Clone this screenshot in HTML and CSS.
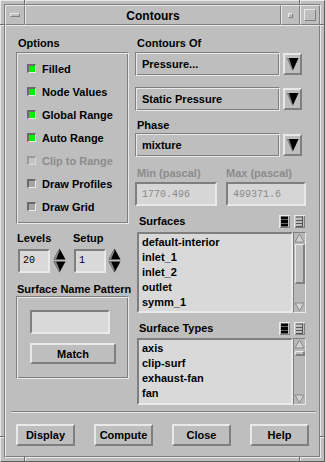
FILE: index.html
```html
<!DOCTYPE html>
<html>
<head>
<meta charset="utf-8">
<title>Contours</title>
<link rel="stylesheet" href="styles.css">
</head>
<body>
<div class="win">
  <div class="inner">
    <div class="titlebar">
      <div class="tbtn menu"><span class="menubar"></span></div>
      <div class="tbtn title">Contours</div>
      <div class="tbtn mini"><span class="minisq"></span></div>
      <div class="tbtn maxi"><span class="maxsq"></span></div>
    </div>
    <div class="client">
      <div class="main">
        <div class="leftcol">
          <div class="lbl lpad">Options</div>
          <div class="etched options">
            <div class="chk on"><span class="box"></span>Filled</div>
            <div class="chk on"><span class="box"></span>Node Values</div>
            <div class="chk on"><span class="box"></span>Global Range</div>
            <div class="chk on"><span class="box"></span>Auto Range</div>
            <div class="chk dis"><span class="box"></span>Clip to Range</div>
            <div class="chk"><span class="box"></span>Draw Profiles</div>
            <div class="chk"><span class="box"></span>Draw Grid</div>
          </div>
          <div class="spinrow">
            <div class="spingrp g1">
              <div class="lbl">Levels</div>
              <div class="spin">
                <div class="field mono">20</div>
                <svg class="arrows" width="13" height="25" viewBox="0 0 13 25">
                  <polygon points="0.5,11.5 12.5,11.5 6.5,0.5" fill="#000"/>
                  <polygon points="0.5,11.5 3,11.5 6.5,3 6.5,0.5" fill="#8a8a8a"/>
                  <polygon points="0.5,13.5 12.5,13.5 6.5,24.5" fill="#000"/>
                  <polygon points="0.5,13.5 3,13.5 6.5,21.5 6.5,24.5" fill="#8a8a8a"/>
                </svg>
              </div>
            </div>
            <div class="spingrp g2">
              <div class="lbl">Setup</div>
              <div class="spin">
                <div class="field mono">1</div>
                <svg class="arrows" width="13" height="25" viewBox="0 0 13 25">
                  <polygon points="0.5,11.5 12.5,11.5 6.5,0.5" fill="#000"/>
                  <polygon points="0.5,11.5 3,11.5 6.5,3 6.5,0.5" fill="#8a8a8a"/>
                  <polygon points="0.5,13.5 12.5,13.5 6.5,24.5" fill="#000"/>
                  <polygon points="0.5,13.5 3,13.5 6.5,21.5 6.5,24.5" fill="#8a8a8a"/>
                </svg>
              </div>
            </div>
          </div>
          <div class="lbl snp">Surface Name Pattern</div>
          <div class="etched pattern">
            <div class="field patfield"></div>
            <div class="btn match">Match</div>
          </div>
        </div>

        <div class="rightcol">
          <div class="lbl rpad">Contours Of</div>
          <div class="dd first">
            <div class="ddtext">Pressure...</div>
            <div class="ddbtn">
              <svg width="15" height="18" viewBox="0 0 15 18">
                <polygon points="1.5,3 13.5,3 7.5,16" fill="#808080"/>
                <polygon points="4,3 13.5,3 8,15" fill="#000"/>
              </svg>
            </div>
          </div>
          <div class="dd second">
            <div class="ddtext">Static Pressure</div>
            <div class="ddbtn">
              <svg width="15" height="18" viewBox="0 0 15 18">
                <polygon points="1.5,3 13.5,3 7.5,16" fill="#808080"/>
                <polygon points="4,3 13.5,3 8,15" fill="#000"/>
              </svg>
            </div>
          </div>
          <div class="lbl rpad phase">Phase</div>
          <div class="dd third">
            <div class="ddtext">mixture</div>
            <div class="ddbtn">
              <svg width="15" height="18" viewBox="0 0 15 18">
                <polygon points="1.5,3 13.5,3 7.5,16" fill="#808080"/>
                <polygon points="4,3 13.5,3 8,15" fill="#000"/>
              </svg>
            </div>
          </div>
          <div class="mmlabels"><span class="mmmin">Min (pascal)</span><span class="mmmax">Max (pascal)</span></div>
          <div class="mmfields">
            <div class="field mono disabled fmin">1770.496</div>
            <div class="field mono disabled fmax">499371.6</div>
          </div>

          <div class="listhead">
            <span class="lbl">Surfaces</span>
            <span class="icons">
              <svg class="icon" width="11" height="13" viewBox="0 0 11 13">
                <rect x="0" y="0" width="11" height="13" fill="#e9e9e9"/>
                <rect x="1" y="1" width="10" height="12" fill="#7f7f7f"/>
                <rect x="1" y="1" width="9" height="11" fill="#c8c8c8"/>
                <rect x="2" y="1.5" width="7" height="3" fill="#000"/>
                <rect x="2" y="5" width="7" height="3" fill="#000"/>
                <rect x="2" y="8.5" width="7" height="3" fill="#000"/>
              </svg>
              <svg class="icon" width="11" height="13" viewBox="0 0 11 13">
                <rect x="0" y="0" width="11" height="13" fill="#e9e9e9"/>
                <rect x="1" y="1" width="10" height="12" fill="#7f7f7f"/>
                <rect x="1" y="1" width="9" height="11" fill="#bebebe"/>
                <rect x="2" y="1.5" width="7" height="1" fill="#555"/>
                <rect x="2" y="5" width="7" height="1" fill="#555"/>
                <rect x="2" y="8" width="7" height="1" fill="#555"/>
                <rect x="2" y="11" width="7" height="1" fill="#555"/>
                <rect x="8" y="1.5" width="1" height="10" fill="#555"/>
              </svg>
            </span>
          </div>
          <div class="listwrap surf">
            <div class="list">
              <div class="item">default-interior</div>
              <div class="item">inlet_1</div>
              <div class="item">inlet_2</div>
              <div class="item">outlet</div>
              <div class="item">symm_1</div>
            </div>
            <div class="sb">
              <svg class="sbarrow" width="11" height="10" viewBox="0 0 11 10">
                <polygon points="1,9 10,9 5.5,1" fill="#d2d2d2" stroke="#8a8a8a" stroke-width="1"/>
              </svg>
              <div class="slider big"></div>
              <div class="sbfill"></div>
              <svg class="sbarrow" width="11" height="10" viewBox="0 0 11 10">
                <polygon points="1,1 10,1 5.5,9" fill="#d2d2d2" stroke="#8a8a8a" stroke-width="1"/>
              </svg>
            </div>
          </div>

          <div class="listhead second">
            <span class="lbl">Surface Types</span>
            <span class="icons">
              <svg class="icon" width="11" height="13" viewBox="0 0 11 13">
                <rect x="0" y="0" width="11" height="13" fill="#e9e9e9"/>
                <rect x="1" y="1" width="10" height="12" fill="#7f7f7f"/>
                <rect x="1" y="1" width="9" height="11" fill="#c8c8c8"/>
                <rect x="2" y="1.5" width="7" height="3" fill="#000"/>
                <rect x="2" y="5" width="7" height="3" fill="#000"/>
                <rect x="2" y="8.5" width="7" height="3" fill="#000"/>
              </svg>
              <svg class="icon" width="11" height="13" viewBox="0 0 11 13">
                <rect x="0" y="0" width="11" height="13" fill="#e9e9e9"/>
                <rect x="1" y="1" width="10" height="12" fill="#7f7f7f"/>
                <rect x="1" y="1" width="9" height="11" fill="#bebebe"/>
                <rect x="2" y="1.5" width="7" height="1" fill="#555"/>
                <rect x="2" y="5" width="7" height="1" fill="#555"/>
                <rect x="2" y="8" width="7" height="1" fill="#555"/>
                <rect x="2" y="11" width="7" height="1" fill="#555"/>
                <rect x="8" y="1.5" width="1" height="10" fill="#555"/>
              </svg>
            </span>
          </div>
          <div class="listwrap types">
            <div class="list">
              <div class="item">axis</div>
              <div class="item">clip-surf</div>
              <div class="item">exhaust-fan</div>
              <div class="item">fan</div>
            </div>
            <div class="sb">
              <svg class="sbarrow" width="11" height="10" viewBox="0 0 11 10">
                <polygon points="1,9 10,9 5.5,1" fill="#d2d2d2" stroke="#8a8a8a" stroke-width="1"/>
              </svg>
              <div class="slider small"></div>
              <div class="sbfill"></div>
              <svg class="sbarrow" width="11" height="10" viewBox="0 0 11 10">
                <polygon points="1,1 10,1 5.5,9" fill="#d2d2d2" stroke="#8a8a8a" stroke-width="1"/>
              </svg>
            </div>
          </div>
        </div>
      </div>
      <div class="sep"></div>
      <div class="buttons">
        <div class="btn">Display</div>
        <div class="btn">Compute</div>
        <div class="btn">Close</div>
        <div class="btn">Help</div>
      </div>
    </div>
  </div>
  <span class="notch v tl"></span>
  <span class="notch v tr"></span>
  <span class="notch v bl"></span>
  <span class="notch v br"></span>
  <span class="notch h lt"></span>
  <span class="notch h rt"></span>
  <span class="notch h lb"></span>
  <span class="notch h rb"></span>
</div>
</body>
</html>
```
FILE: styles.css
```css
:root {
  --bg: #bebebe;
  --light: #e9e9e9;
  --dark: #7f7f7f;
  --field: #d9d9d9;
}

* { box-sizing: border-box; }

body {
  margin: 0;
  background: var(--bg);
  font-family: "Liberation Sans", Arial, sans-serif;
  font-weight: bold;
  font-size: 11px;
  color: #000;
}

.win {
  position: relative;
  width: 325px;
  height: 462px;
  border: 1px solid;
  border-color: var(--light) #5c5c5c #5c5c5c var(--light);
  padding: 3px;
  background: var(--bg);
  display: flex;
}

.inner {
  flex: 1;
  display: flex;
  flex-direction: column;
  border: 1px solid;
  border-color: var(--dark) var(--light) var(--light) var(--dark);
}

/* Title bar */
.titlebar {
  display: flex;
  height: 20px;
}
.tbtn {
  border: 1px solid;
  border-color: var(--light) var(--dark) var(--dark) var(--light);
  display: flex;
  align-items: center;
  justify-content: center;
}
.menu { width: 20px; }
.title {
  flex: 1;
  font-size: 12px;
  padding-top: 1px;
}
.mini { width: 19px; }
.maxi { width: 20px; }
.menubar {
  width: 10px;
  height: 4px;
  border: 1px solid;
  border-color: var(--light) var(--dark) var(--dark) var(--light);
}
.minisq {
  width: 5px;
  height: 5px;
  border: 1px solid;
  border-color: var(--light) var(--dark) var(--dark) var(--light);
}
.maxsq {
  width: 12px;
  height: 12px;
  border: 1px solid;
  border-color: var(--light) var(--dark) var(--dark) var(--light);
}

/* Client */
.client {
  flex: 1;
  border: 1px solid;
  border-color: var(--light) var(--dark) var(--dark) var(--light);
  padding: 10px 3px 0 5px;
  display: flex;
  flex-direction: column;
}
.main {
  display: flex;
  gap: 6px;
  padding: 0 8px 0 5px;
}
.leftcol { width: 113px; display: flex; flex-direction: column; }
.rightcol { width: 171px; display: flex; flex-direction: column; }

.lbl {
  height: 14px;
  line-height: 14px;
  white-space: nowrap;
}
.lpad { padding-left: 2px; }
.rpad { padding-left: 2px; }

.etched {
  border: 1px solid;
  border-color: var(--dark) var(--light) var(--light) var(--dark);
  box-shadow: inset 1px 1px 0 var(--light), inset -1px -1px 0 var(--dark);
}

/* Options */
.options {
  margin-top: 2px;
  height: 172px;
  padding: 4px 0 4px 10px;
}
.chk {
  height: 23px;
  display: flex;
  align-items: center;
  gap: 6px;
  white-space: nowrap;
}
.box {
  width: 9px;
  height: 9px;
  border-style: solid;
  border-width: 2px 1px 1px 2px;
  border-color: #6a6a6a var(--light) var(--light) #6a6a6a;
  background: #a6a6a6;
}
.chk.on .box { background: #00f000; }
.chk.dis { color: #8c8c8c; }
.chk.dis .box { background: #c4c4c4; border-color: #9a9a9a #d8d8d8 #d8d8d8 #9a9a9a; }

/* Spinners */
.spinrow { display: flex; margin-top: 7px; }
.g1 { width: 57px; padding-left: 1px; }
.g2 { width: 56px; }
.spin { display: flex; margin-top: 3px; align-items: center; }
.g1 .field { margin-left: 1px; }
.g2 .field { margin-left: 1px; }
.spin .field { width: 32px; height: 24px; padding-left: 3px; }
.g1 .arrows { margin-left: 3px; }
.g2 .arrows { margin-left: 2px; }

.field {
  background: var(--field);
  border-style: solid;
  border-width: 2px;
  border-color: var(--dark) var(--light) var(--light) var(--dark);
  display: flex;
  align-items: center;
}
.mono {
  font-family: "Liberation Mono", "DejaVu Sans Mono", monospace;
  font-weight: normal;
  font-size: 10px;
}
.disabled { color: #8a8a8a; background: #d6d6d6; }

.snp { margin-top: 9px; padding-left: 1px; }
.pattern {
  height: 83px;
  padding: 13px 0 0 13px;
}
.patfield { width: 80px; height: 24px; }
.btn {
  border-style: solid;
  border-width: 2px;
  border-color: var(--light) var(--dark) var(--dark) var(--light);
  display: flex;
  align-items: center;
  justify-content: center;
  background: var(--bg);
}
.match { width: 86px; height: 21px; margin-top: 9px; }

/* Drop downs */
.dd {
  display: flex;
  align-items: center;
  gap: 3px;
  height: 24px;
}
.dd.first { margin-top: 2px; }
.dd.second { margin-top: 11px; }
.phase { margin-top: 7px; }
.dd.third { margin-top: 1px; }
.ddtext {
  width: 145px;
  height: 24px;
  padding-left: 6px;
  display: flex;
  align-items: center;
  border: 1px solid;
  border-color: var(--dark) var(--light) var(--light) var(--dark);
  box-shadow: inset 1px 1px 0 var(--light), inset -1px -1px 0 var(--dark);
}
.ddbtn {
  width: 19px;
  height: 22px;
  border-style: solid;
  border-width: 2px;
  border-color: var(--light) var(--dark) var(--dark) var(--light);
  display: flex;
}

.mmlabels {
  display: flex;
  margin-top: 9px;
  height: 14px;
  line-height: 14px;
  color: #8c8c8c;
  white-space: nowrap;
}
.mmmin { width: 91px; padding-left: 2px; }
.mmfields { display: flex; margin-top: 2px; }
.fmin { width: 82px; height: 24px; padding-left: 5px; }
.fmax { width: 80px; height: 24px; margin-left: 9px; padding-left: 5px; }

/* Lists */
.listhead {
  display: flex;
  align-items: center;
  height: 14px;
  margin-top: 8px;
  padding-left: 4px;
}
.listhead .lbl { flex: 1; }
.icons { display: flex; gap: 4px; margin-right: 1px; }
.icon { display: block; }

.listwrap {
  display: flex;
  margin-top: 4px;
  padding-left: 2px;
}
.listwrap.surf { height: 81px; }
.listwrap.types { height: 67px; margin-top: 3px; }
.list {
  width: 156px;
  background: var(--field);
  border-style: solid;
  border-width: 2px;
  border-color: var(--dark) var(--light) var(--light) var(--dark);
  padding: 1px 0 0 3px;
  overflow: hidden;
}
.item {
  height: 15px;
  line-height: 15px;
  white-space: nowrap;
}
.sb {
  width: 13px;
  border: 1px solid;
  border-color: var(--dark) var(--light) var(--light) var(--dark);
  display: flex;
  flex-direction: column;
  align-items: center;
  background: #b8b8b8;
}
.sbarrow { display: block; flex: none; }
.slider {
  width: 10px;
  margin-top: 1px;
  border-style: solid;
  border-width: 1px 2px 2px 1px;
  border-color: var(--light) var(--dark) var(--dark) var(--light);
  background: var(--bg);
}
.slider.big { height: 40px; }
.slider.small { height: 5px; margin-top: 2px; }
.sbfill { flex: 1; }

/* Bottom */
.sep {
  margin-top: 6px;
  height: 2px;
  border-top: 1px solid var(--dark);
  border-bottom: 1px solid var(--light);
}
.buttons {
  display: flex;
  gap: 19px;
  margin-top: 11px;
  padding-left: 5px;
}
.buttons .btn { width: 59px; height: 22px; }

/* Window frame corner notches */
.notch {
  position: absolute;
  display: block;
}
.notch.v {
  width: 2px;
  height: 4px;
  border-left: 1px solid #6a6a6a;
  border-right: 1px solid var(--light);
}
.notch.h {
  width: 4px;
  height: 2px;
  border-top: 1px solid #6a6a6a;
  border-bottom: 1px solid var(--light);
}
.notch.tl { left: 23px; top: -1px; }
.notch.tr { left: 298px; top: -1px; }
.notch.bl { left: 23px; top: 456px; }
.notch.br { left: 298px; top: 456px; }
.notch.lt { left: -1px; top: 23px; }
.notch.rt { left: 319px; top: 23px; }
.notch.lb { left: -1px; top: 435px; }
.notch.rb { left: 319px; top: 435px; }
```
